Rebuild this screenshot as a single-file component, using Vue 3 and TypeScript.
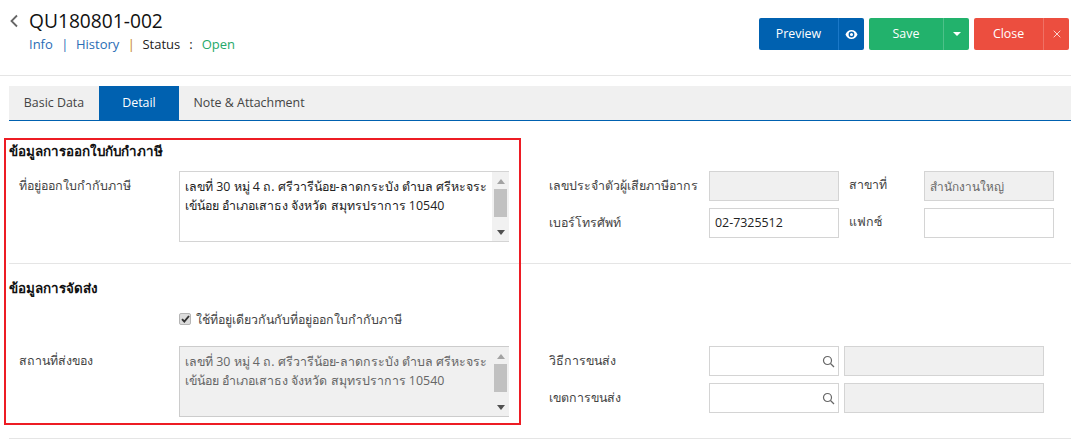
<script setup lang="ts">
const addressLines = [
  'เลขที่ 30 หมู่ 4 ถ. ศรีวารีน้อย-ลาดกระบัง ตำบล ศรีหะจระ',
  'เข้น้อย อำเภอเสาธง จังหวัด สมุทรปราการ 10540',
]
</script>

<template>
  <div class="page">
    <header class="head">
      <div class="title-side">
        <svg class="back" width="10" height="14" viewBox="0 0 10 14"><path d="M8 1.500 2.500 7 8 12.500" fill="none" stroke="#666" stroke-width="1.800" /></svg>
        <div class="title-text">
          <h1>QU180801-002</h1>
          <div class="sub">
            <a>Info</a><span class="sep blue">|</span><a>History</a><span class="sep orange">|</span><span class="st">Status</span><span class="colon">:</span><span class="open">Open</span>
          </div>
        </div>
      </div>
      <div class="actions">
        <div class="btn blue-btn">
          <span class="main w79">Preview</span>
          <span class="side w26">
            <svg width="13" height="9" viewBox="0 0 14 10"><path d="M7 0C3.800 0 1.400 2.200 0.300 5 1.400 7.800 3.800 10 7 10s5.600-2.200 6.700-5C12.600 2.200 10.200 0 7 0Zm0 8.200A3.200 3.200 0 1 1 7 1.800a3.200 3.200 0 0 1 0 6.400ZM7 3.300a1.700 1.700 0 1 0 0 3.400 1.700 1.700 0 0 0 0-3.400Z" fill="#fff" fill-rule="evenodd" /></svg>
          </span>
        </div>
        <div class="btn green-btn">
          <span class="main w74">Save</span>
          <span class="side w26"><i class="caret"></i></span>
        </div>
        <div class="btn red-btn">
          <span class="main w69">Close</span>
          <span class="side w26">
            <svg width="8" height="8" viewBox="0 0 8 8"><path d="M.7.700l6.600 6.600M7.300.7.700 7.300" stroke="#fbd5d0" stroke-width="1" fill="none" /></svg>
          </span>
        </div>
      </div>
    </header>

    <nav class="tabs">
      <span class="tab t1">Basic Data</span>
      <span class="tab t2 active">Detail</span>
      <span class="tab t3">Note &amp; Attachment</span>
    </nav>

    <section class="sec first">
      <div class="left">
        <h2>ข้อมูลการออกใบกับกำภาษี</h2>
        <div class="field">
          <label>ที่อยู่ออกใบกำกับภาษี</label>
          <div class="area">
            <div class="area-text"><div v-for="line in addressLines" :key="line">{{ line }}</div></div>
            <div class="bar"><i class="up"></i><b class="thumb"></b><i class="down"></i></div>
          </div>
        </div>
      </div>
      <div class="right r1">
        <div class="row">
          <label class="rl">เลขประจำตัวผู้เสียภาษีอากร</label>
          <div class="input off"></div>
          <label class="rl2">สาขาที่</label>
          <div class="input off thai">สำนักงานใหญ่</div>
        </div>
        <div class="row">
          <label class="rl">เบอร์โทรศัพท์</label>
          <div class="input dark">02-7325512</div>
          <label class="rl2">แฟกซ์</label>
          <div class="input"></div>
        </div>
      </div>
    </section>

    <section class="sec second">
      <div class="left">
        <h2 class="h2b">ข้อมูลการจัดส่ง</h2>
        <div class="check">
          <span class="box">
            <svg width="9" height="8" viewBox="0 0 9 8"><path d="M1 4.200 3.300 6.500 8 1" fill="none" stroke="#333" stroke-width="1.900" /></svg>
          </span>
          <span>ใช้ที่อยู่เดียวกันกับที่อยู่ออกใบกำกับภาษี</span>
        </div>
        <div class="field">
          <label>สถานที่ส่งของ</label>
          <div class="area disabled">
            <div class="area-text"><div v-for="line in addressLines" :key="line">{{ line }}</div></div>
            <div class="bar"><i class="up"></i><b class="thumb"></b><i class="down"></i></div>
          </div>
        </div>
      </div>
      <div class="right r2">
        <div class="row">
          <label class="rl">วิธีการขนส่ง</label>
          <div class="input search">
            <svg width="13" height="13" viewBox="0 0 13 13"><circle cx="5.500" cy="5.500" r="4" fill="none" stroke="#666" stroke-width="1.200" /><path d="m8.500 8.500 3.500 3.500" stroke="#666" stroke-width="1.300" /></svg>
          </div>
          <div class="input off wide"></div>
        </div>
        <div class="row">
          <label class="rl">เขตการขนส่ง</label>
          <div class="input search">
            <svg width="13" height="13" viewBox="0 0 13 13"><circle cx="5.500" cy="5.500" r="4" fill="none" stroke="#666" stroke-width="1.200" /><path d="m8.500 8.500 3.500 3.500" stroke="#666" stroke-width="1.300" /></svg>
          </div>
          <div class="input off wide"></div>
        </div>
      </div>
    </section>

    <div class="highlight"></div>
  </div>
</template>

<style>
html, body { margin: 0; background: #fff; overflow: hidden; }
</style>

<style scoped>
.page {
  position: relative;
  width: 1071px;
  height: 446px;
  overflow: hidden;
  font-family: "Open Sans", "Noto Sans", "Liberation Sans", sans-serif;
  font-size: 12.400px;
  color: #444;
}
.head {
  height: 75px;
  border-bottom: 1px solid #e5e5e5;
  display: flex;
  justify-content: space-between;
}
.title-side { display: flex; padding: 13px 0 0 9px; }
.back { margin: 1px 10px 0 0; }
h1 { margin: 0; font-size: 19.200px; font-weight: 400; line-height: 16px; color: #111; }
.sub { margin-top: 6px; font-size: 13px; line-height: 18px; display: flex; }
.sub a { color: #2a6db5; }
.sep { margin: 0 7.500px 0 8.500px; }
.sep.blue { color: #2a6db5; }
.sep.orange { color: #c8860a; }
.st { color: #222; }
.colon { margin: 0 9px; color: #222; }
.open { color: #25a96a; }
.actions { display: flex; gap: 5px; padding: 18px 2px 0 0; align-items: flex-start; }
.btn { display: flex; height: 32px; border-radius: 2px; overflow: hidden; color: #fff; font-size: 12.400px; line-height: 32px; text-align: center; }
.main { display: block; }
.side { display: flex; align-items: center; justify-content: center; border-left: 1px solid rgba(255, 255, 255, 0.2); box-sizing: border-box; }
.w79 { width: 79px; }
.w74 { width: 74px; }
.w69 { width: 69px; }
.w26 { width: 26px; }
.blue-btn { background: #0061b0; }
.blue-btn .side { border-left-color: #1a78c8; }
.green-btn { background: #22b26c; }
.red-btn { background: #ec4e3f; }
.caret { border-left: 4px solid transparent; border-right: 4px solid transparent; border-top: 4px solid #fff; }
.tabs {
  display: flex;
  margin: 10px 0 0 9px;
  height: 34px;
  background: #f0f0f0;
  border-bottom: 1px solid #0061b0;
}
.tab { line-height: 33px; text-align: center; color: #444; }
.t1 { width: 90px; }
.t2 { width: 80px; }
.t3 { width: 140px; }
.active { background: #0061b0; color: #fff; }
.sec { display: flex; margin-left: 9px; border-bottom: 1px solid #e5e5e5; box-sizing: border-box; }
.first { height: 143px; }
.second { height: 175px; }
.left { width: 540px; flex: none; }
h2 { margin: 21px 0 0; font-size: 13.400px; line-height: 18px; font-weight: 700; color: #111; }
.h2b { margin-top: 15px; }
.field { display: flex; margin-top: 11px; }
.second .field { margin-top: 17px; }
.field label { width: 170px; padding: 5px 0 0 10px; box-sizing: border-box; line-height: 20px; }
.area {
  width: 330px;
  height: 71px;
  box-sizing: border-box;
  border: 1px solid #d4d4d4;
  display: flex;
  background: #fff;
  color: #222;
}
.area.disabled { background: #f0f0f0; color: #666; border-color: #ccc; }
.area-text { flex: 1; padding: 5px 5px; font-size: 12.400px; line-height: 19px; white-space: nowrap; }
.bar { width: 17px; flex: none; background: #f1f1f1; display: flex; flex-direction: column; align-items: center; justify-content: space-between; padding: 7px 0 6px; box-sizing: border-box; }
.disabled .bar { background: #f0f0f0; }
.thumb { display: block; width: 13px; height: 28px; background: #c1c1c1; margin: 5px 0 auto; }
.up { border-left: 4px solid transparent; border-right: 4px solid transparent; border-bottom: 5px solid #a3a3a3; }
.down { border-left: 4px solid transparent; border-right: 4px solid transparent; border-top: 5px solid #505050; }
.check { display: flex; align-items: center; margin: 12px 0 0 170px; height: 20px; gap: 5px; }
.box { display: flex; align-items: center; justify-content: center; width: 12px; height: 12px; box-sizing: border-box; border: 1px solid #b5b5b5; border-radius: 2px; background: #dcdcdc; }
.right { display: flex; flex-direction: column; gap: 7px; }
.r1 { padding-top: 50px; }
.r2 { padding-top: 82px; }
.row { display: flex; align-items: flex-start; }
.rl { width: 160px; line-height: 30px; }
.rl2 { width: 75px; margin-left: 10px; line-height: 28px; }
.input {
  width: 130px;
  height: 30px;
  box-sizing: border-box;
  border: 1px solid #d4d4d4;
  background: #fff;
  padding: 0 5px;
  line-height: 28px;
  font-size: 12.400px;
}
.input.off { background: #f0f0f0; color: #666; }
.input.thai { font-size: 11.800px; }
.input.dark { color: #222; }
.search { display: flex; align-items: center; justify-content: flex-end; padding-right: 3px; }
.wide { width: 200px; margin-left: 5px; }
.highlight {
  position: absolute;
  left: 4px;
  top: 138px;
  width: 517px;
  height: 287px;
  box-sizing: border-box;
  border: 2px solid #ed1c24;
  pointer-events: none;
}
</style>
